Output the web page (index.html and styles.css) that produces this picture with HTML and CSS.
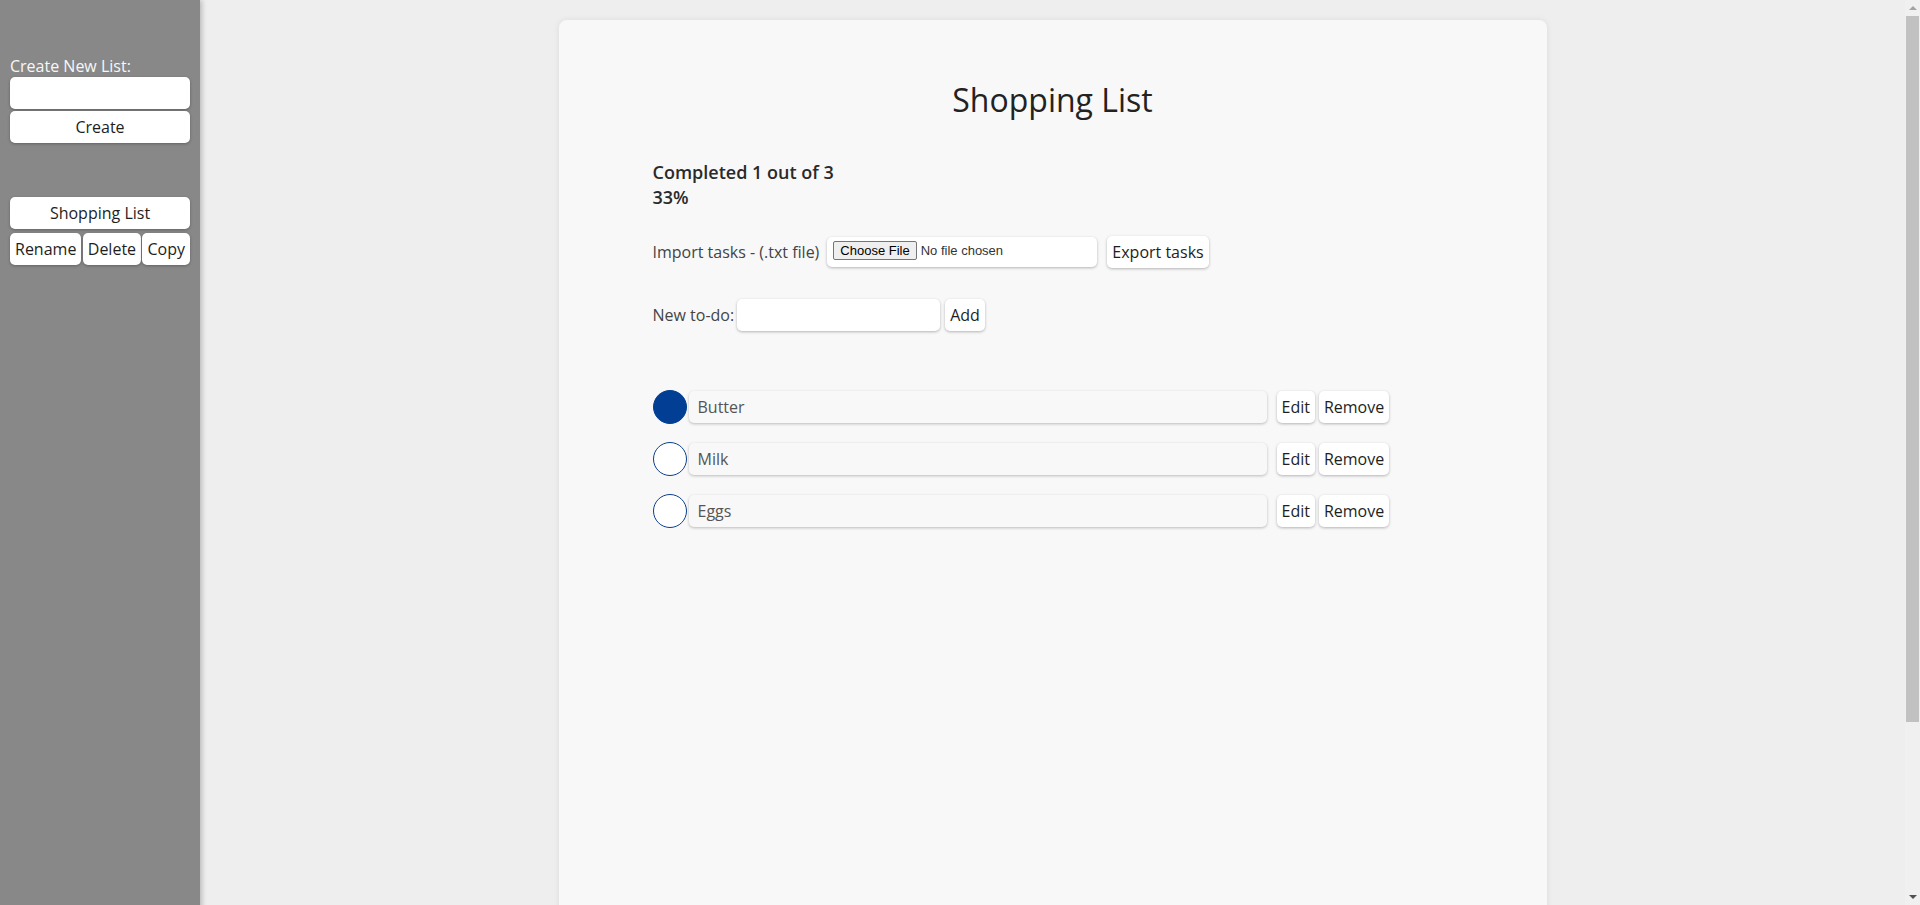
FILE: index.html
```html
<!DOCTYPE html>
<html lang="en">
<head>
<meta charset="utf-8">
<title>Shopping List</title>
<link rel="stylesheet" href="styles.css">
</head>
<body>
<div class="app">
  <aside class="sidebar">
    <label class="side-label" for="newList">Create New List:</label>
    <input class="side-input" id="newList" type="text">
    <button class="btn side-btn create">Create</button>
    <div class="lists">
      <button class="btn side-btn">Shopping List</button>
      <div class="list-actions">
        <button class="btn">Rename</button>
        <button class="btn">Delete</button>
        <button class="btn">Copy</button>
      </div>
    </div>
  </aside>
  <main class="main">
    <section class="card">
      <h1 class="title">Shopping List</h1>
      <div class="content">
        <div class="stats">
          <div>Completed 1 out of 3</div>
          <div>33%</div>
        </div>
        <div class="import-row">
          <label class="row-label" for="importFile">Import tasks - (.txt file)</label>
          <input class="file" id="importFile" type="file" accept=".txt">
          <button class="btn">Export tasks</button>
        </div>
        <div class="new-row">
          <label class="row-label new-label" for="newTodo">New to-do:</label>
          <input class="new-input" id="newTodo" type="text">
          <button class="btn">Add</button>
        </div>
        <ul class="todos">
          <li class="todo">
            <span class="check done"></span>
            <input class="todo-text" type="text" value="Butter" readonly>
            <button class="btn edit">Edit</button>
            <button class="btn">Remove</button>
          </li>
          <li class="todo">
            <span class="check"></span>
            <input class="todo-text" type="text" value="Milk" readonly>
            <button class="btn edit">Edit</button>
            <button class="btn">Remove</button>
          </li>
          <li class="todo">
            <span class="check"></span>
            <input class="todo-text" type="text" value="Eggs" readonly>
            <button class="btn edit">Edit</button>
            <button class="btn">Remove</button>
          </li>
        </ul>
      </div>
    </section>
  </main>
</div>
<div class="scrollbar" aria-hidden="true">
  <span class="sb-arrow sb-up"></span>
  <span class="sb-thumb"></span>
  <span class="sb-track"></span>
  <span class="sb-arrow sb-down"></span>
</div>
</body>
</html>
```
FILE: styles.css
```css
html, body {
  margin: 0;
  padding: 0;
}

body {
  font-family: "Open Sans", "Noto Sans", sans-serif;
  font-size: 16px;
  background: #eeeeee;
  color: #222;
}

.app {
  display: flex;
  min-height: 100vh;
}

.sidebar {
  flex: 0 0 200px;
  width: 200px;
  box-sizing: border-box;
  background: #888888;
  padding: 55px 10px 0;
  display: flex;
  flex-direction: column;
  box-shadow: 2px 0 5px rgba(0, 0, 0, 0.22);
  position: relative;
  z-index: 1;
}

.side-label {
  color: #f7f7f7;
  line-height: 22px;
}

.side-input {
  height: 32px;
  box-sizing: border-box;
  border: none;
  border-radius: 5px;
  background: #fff;
  box-shadow: 0 1px 3px rgba(0, 0, 0, 0.3);
  margin: 0;
  padding: 0 6px;
  font: 16px "Open Sans", sans-serif;
}

.btn {
  background: #fff;
  border: none;
  border-radius: 5px;
  box-shadow: 0 1px 3px rgba(0, 0, 0, 0.28);
  font-family: "Open Sans", "Noto Sans", sans-serif;
  font-size: 16px;
  color: #1e1e1e;
  padding: 0 5px;
  height: 32px;
  margin: 0;
  cursor: pointer;
}

.side-btn {
  width: 100%;
}

.create {
  margin-top: 2px;
}

.lists {
  margin-top: 54px;
  display: flex;
  flex-direction: column;
}

.list-actions {
  margin-top: 4px;
  display: flex;
  justify-content: space-between;
}

.main {
  flex: 1;
  padding: 20px 15px 20px 0;
}

.card {
  width: 988px;
  min-height: 1077px;
  box-sizing: border-box;
  margin: 0 auto;
  background: #f8f8f8;
  border-radius: 8px;
  box-shadow: 0 0 6px rgba(0, 0, 0, 0.08);
  padding-top: 58px;
}

.title {
  margin: 0;
  text-align: center;
  font-size: 32px;
  font-weight: 400;
  line-height: normal;
  color: #222;
}

.content {
  width: 800px;
  margin: 39px auto 0;
}

.stats {
  font-size: 18px;
  font-weight: 600;
  line-height: 25px;
  color: #2a2a2a;
}

.row-label {
  color: #444;
}

.import-row {
  margin-top: 26px;
  display: flex;
  align-items: center;
  height: 32px;
}

.import-row .row-label {
  margin-right: 8px;
}

.file {
  width: 270px;
  height: 30px;
  box-sizing: border-box;
  margin-right: 10px;
  padding: 4px 6px 0;
  border: none;
  border-radius: 5px;
  background: #fff;
  box-shadow: 0 1px 3px rgba(0, 0, 0, 0.28);
  font: 13px "Liberation Sans", Arial, sans-serif;
  color: #333;
}

.file::file-selector-button {
  font: 13px "Liberation Sans", Arial, sans-serif;
  background: #efefef;
  border: 1px solid #767676;
  border-radius: 2px;
  padding: 1px 6px;
  margin-right: 4px;
  color: #000;
}

.new-row {
  margin-top: 31px;
  display: flex;
  align-items: center;
  height: 32px;
}

.new-label {
  margin-right: 3px;
}

.new-input {
  width: 203px;
  height: 32px;
  box-sizing: border-box;
  border: none;
  border-radius: 5px;
  background: #fff;
  box-shadow: 0 1px 3px rgba(0, 0, 0, 0.28);
  margin-right: 5px;
  padding: 0 6px;
  font: 16px "Open Sans", sans-serif;
}

.todos {
  list-style: none;
  margin: 59px 0 0;
  padding: 0;
  display: flex;
  flex-direction: column;
  gap: 18px;
}

.todo {
  display: flex;
  align-items: center;
  height: 34px;
}

.check {
  width: 34px;
  height: 34px;
  box-sizing: border-box;
  border-radius: 50%;
  border: 1.5px solid #0b3f8e;
  background: #fff;
  margin-right: 2px;
  flex: 0 0 auto;
}

.check.done {
  background: #023f94;
  border-color: #023f94;
}

.todo-text {
  width: 578px;
  height: 32px;
  box-sizing: border-box;
  border: none;
  border-radius: 5px;
  background: #f8f8f8;
  box-shadow: 0 1px 3px rgba(0, 0, 0, 0.25);
  padding: 0 9px;
  margin-right: 10px;
  font: 16px "Open Sans", sans-serif;
  color: #555;
  outline: none;
}

.edit {
  margin-right: 4px;
}

/* window scrollbar (drawn over the page edge) */
.scrollbar {
  position: fixed;
  top: 0;
  right: 0;
  width: 15px;
  height: 100vh;
  background: #f0f0f0;
  display: flex;
  flex-direction: column;
  align-items: center;
  z-index: 5;
}

.sb-arrow {
  flex: 0 0 16px;
  width: 15px;
  display: flex;
  align-items: center;
  justify-content: center;
}

.sb-arrow::before {
  content: "";
  width: 0;
  height: 0;
  border-left: 4px solid transparent;
  border-right: 4px solid transparent;
}

.sb-up::before {
  border-bottom: 4px solid #a3a3a3;
}

.sb-down::before {
  border-top: 4px solid #505050;
}

.sb-thumb {
  flex: 0 0 706px;
  width: 13px;
  background: #c1c1c1;
}

.sb-track {
  flex: 1;
}
```
